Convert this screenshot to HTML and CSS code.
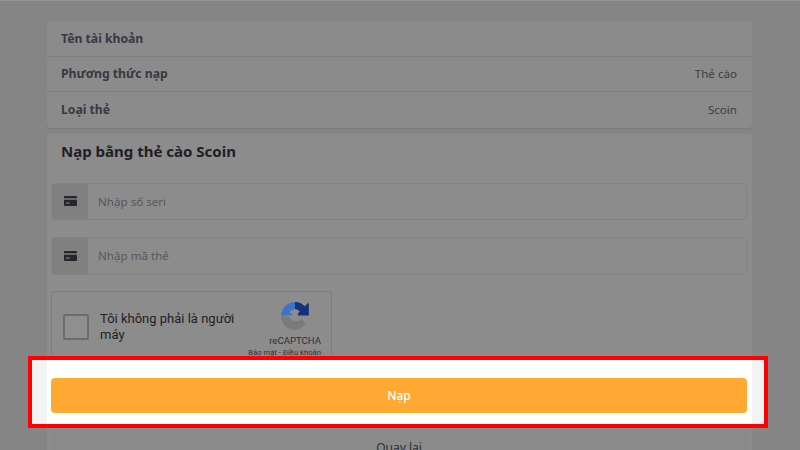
FILE: index.html
```html
<!DOCTYPE html>
<html lang="vi">
<head>
<meta charset="utf-8">
<title>Nạp bằng thẻ cào Scoin</title>
<link rel="stylesheet" href="styles.css">
</head>
<body>
<main class="page">
  <section class="summary">
    <div class="row"><strong>Tên tài khoản</strong></div>
    <div class="row"><strong>Phương thức nạp</strong><span>Thẻ cào</span></div>
    <div class="row"><strong>Loại thẻ</strong><span>Scoin</span></div>
  </section>
  <section class="form-card">
    <h1 class="title">Nạp bằng thẻ cào Scoin</h1>
    <div class="field">
      <div class="field-icon">
        <svg class="card-icon" viewBox="0 0 13 10"><path d="M1 0h11a1 1 0 0 1 1 1v8a1 1 0 0 1-1 1H1a1 1 0 0 1-1-1V1a1 1 0 0 1 1-1zM0 2.2v1.6h13V2.2zM2 6.5v1.2h3.5V6.5z" fill-rule="evenodd"/></svg>
      </div>
      <div class="field-input">Nhập số seri</div>
    </div>
    <div class="field field-second">
      <div class="field-icon">
        <svg class="card-icon" viewBox="0 0 13 10"><path d="M1 0h11a1 1 0 0 1 1 1v8a1 1 0 0 1-1 1H1a1 1 0 0 1-1-1V1a1 1 0 0 1 1-1zM0 2.2v1.6h13V2.2zM2 6.5v1.2h3.5V6.5z" fill-rule="evenodd"/></svg>
      </div>
      <div class="field-input">Nhập mã thẻ</div>
    </div>
    <div class="captcha">
      <div class="checkbox"></div>
      <div class="captcha-text">Tôi không phải là người máy</div>
      <div class="captcha-brand">
        <svg class="captcha-logo" viewBox="0 0 28 28">
          <path d="M.2 13.5 A13.8 13.8 0 0 1 14 0 V7 A7 7 0 0 0 8.6 10.5 L12 13.5 Z" fill="#3d74c8"/>
          <path d="M14 0 A13.8 13.8 0 0 1 23.8 4.2 L27.8 .5 V13.5 H14.8 L18.8 9.4 A7 7 0 0 0 14 7 Z" fill="#16307c"/>
          <path d="M.2 14.2 H6.8 L11 18 A7 7 0 0 0 20.5 17 L24.5 21 A13.8 13.8 0 0 1 14 28 A13.8 13.8 0 0 1 .2 14.2 Z" fill="#7a7a7a"/>
          <path d="M13 11 L17 11 L17 15 L13 15 Z" fill="#8c8c8c"/>
        </svg>
        <div class="captcha-name">reCAPTCHA</div>
        <div class="captcha-links">Bảo mật - Điều khoản</div>
      </div>
    </div>
    <div class="highlight">
      <div class="highlight-inner">
        <button class="submit" type="button">Nạp</button>
      </div>
    </div>
    <button class="back" type="button">Quay lại</button>
  </section>
</main>
</body>
</html>
```
FILE: styles.css
```css
html, body {
  margin: 0;
  height: 450px;
  overflow: hidden;
  background: #858585;
}
body {
  font-family: "Noto Sans", "Open Sans", sans-serif;
  color: #2e3038;
}
.page {
  box-sizing: border-box;
  height: 450px;
  overflow: hidden;
  padding: 21px 48px 0 47px;
  border-top: 1px solid #939393;
}
.summary {
  background: #8b8b8b;
  border-radius: 4px;
  box-shadow: 0 1px 1px #7b7b7b;
  margin-top: -1px;
}
.row {
  box-sizing: border-box;
  height: 35.5px;
  display: flex;
  justify-content: space-between;
  align-items: center;
  padding: 0 15px 0 14px;
  border-bottom: 1px solid #7f7f7f;
  font-size: 12.2px;
}
.row:last-child { border-bottom: 0; }
.row strong { font-weight: 700; color: #373943; }
.row span { color: #3c3d43; font-size: 11.6px; }
.form-card {
  margin-top: 6px;
  background: #8c8c8c;
  padding: 0 5px 0 4px;
  height: 400px;
}
.title {
  margin: 0;
  padding: 7px 10px 0;
  font-size: 15px;
  line-height: 21px;
  font-weight: 700;
  color: #1f2027;
  height: 42px;
}
.field {
  display: flex;
  height: 37px;
  border: 1px solid #838383;
  border-radius: 4px;
  box-sizing: border-box;
  overflow: hidden;
}
.field-second { margin-top: 17px; height: 38px; }
.field-icon {
  width: 36px;
  background: #808080;
  display: flex;
  align-items: center;
  justify-content: center;
}
.card-icon { width: 13px; height: 10px; fill: #26272c; }
.field-input {
  flex: 1;
  display: flex;
  align-items: center;
  padding-left: 10px;
  font-size: 11.6px;
  color: #57575a;
}
.captcha {
  box-sizing: border-box;
  margin-top: 16px;
  width: 281px;
  height: 72px;
  display: flex;
  align-items: center;
  border: 1px solid #7b7b7b;
  border-radius: 3px;
  background: #8c8c8c;
  padding-left: 11px;
}
.checkbox {
  box-sizing: border-box;
  width: 26px;
  height: 26px;
  border: 2px solid #6c6c6c;
  border-radius: 2px;
  background: #8f8f8f;
  flex: none;
}
.captcha-text {
  margin-left: 11px;
  width: 146px;
  font-family: Roboto, "Noto Sans", sans-serif;
  font-size: 13px;
  line-height: 16px;
  color: #1f1f22;
}
.captcha-brand {
  flex: 1;
  display: flex;
  flex-direction: column;
  align-items: flex-end;
  padding-right: 10px;
  align-self: flex-start;
  padding-top: 10px;
}
.captcha-logo { width: 28px; height: 28px; margin-right: 12px; }
.captcha-name {
  font-family: Roboto, sans-serif;
  font-size: 9.6px;
  line-height: 12px;
  margin-top: 5px;
  color: #2f3036;
}
.captcha-links {
  font-family: Roboto, sans-serif;
  font-size: 7.7px;
  line-height: 10px;
  margin: 1px 0 0 -30px;
  white-space: nowrap;
  color: #2f3036;
}
.highlight {
  position: relative;
  box-sizing: border-box;
  margin: -7px -21px 0 -23px;
  height: 72px;
  border: 4px solid #fe0000;
  background: #f3f3f3;
}
.highlight-inner {
  height: 100%;
  margin: 0 12px 0 15px;
  padding: 18px 5px 0 4px;
  box-sizing: border-box;
  background: #fff;
}
.submit {
  display: block;
  width: 100%;
  height: 35px;
  border: 0;
  border-radius: 4px;
  background: #ffa832;
  color: #fff;
  font: 500 12px "Noto Sans", sans-serif;
  padding: 0;
}
.back {
  display: block;
  width: 100%;
  height: 36px;
  margin-top: 2px;
  border: 0;
  border-radius: 4px;
  background: #8a8a8a;
  color: #2e3038;
  font: 400 12px "Noto Sans", sans-serif;
  padding: 0;
}
```
